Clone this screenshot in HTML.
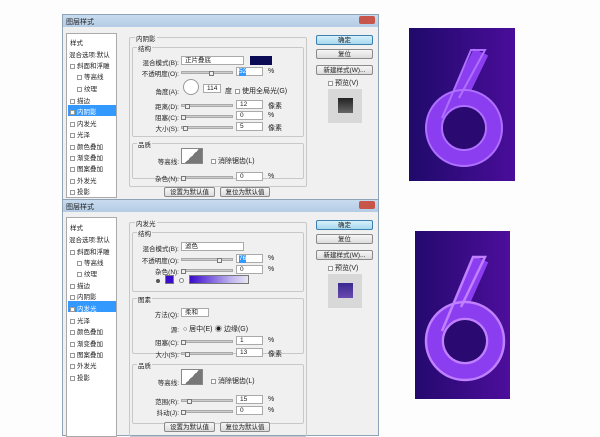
<!DOCTYPE html><html><head><meta charset="utf-8"><style>
*{margin:0;padding:0;box-sizing:border-box}
body{width:600px;height:436px;background:#fdfdfd;position:relative;overflow:hidden;font-family:"Liberation Sans","Noto Sans CJK SC",sans-serif;font-size:7px;color:#222}
div,span{position:absolute}
.dlg{background:#f0f0f0;border:1px solid #8fa3b8}
.tb{background:linear-gradient(#c9dcef,#b3cbe4);left:0;right:0;top:0;height:12px}
.tb span{left:3px;top:2px;font-size:7px}
.x{right:3px;top:1px;width:16px;height:8px;background:#c8554a;border-radius:2px}
.lp{background:#fff;border:1px solid #aaa}
.it{left:3px;white-space:nowrap;font-size:6.5px}
.cb{display:inline-block;position:static;width:5px;height:5px;border:1px solid #999;background:#fff;margin-right:2px;vertical-align:middle}
.sel{background:#3399ff;color:#fff;left:1px;width:48px;height:11px}
.gb{border:1px solid #c8c8c8;border-radius:2px}
.gl{background:#f0f0f0;padding:0 1px;font-size:6.5px}
.btn{border:1px solid #8a8a8a;border-radius:2px;background:linear-gradient(#f6f6f6,#dcdcdc);text-align:center;font-size:6.5px;line-height:9px;height:10px}
.ok{background:linear-gradient(#d6f0fb,#a8d8ee);border-color:#3c7fb1}
.sl{height:3px;background:#ccc;border:1px solid #aaa}
.in{background:#fff;border:1px solid #aaa;height:9px;font-size:6.5px;padding-left:3px;line-height:8px}
.lb{font-size:6.5px;white-space:nowrap;text-align:right;left:46px !important;width:70px}
.th{width:5px;height:5px;background:#eee;border:1px solid #777}
</style></head><body>

<!-- TOP DIALOG -->
<div class="dlg" style="left:62px;top:14px;width:317px;height:186px">
<div class="tb"><span>图层样式</span><div class="x"></div></div>
<div class="lp" style="left:3px;top:18px;width:51px;height:165px">
<span class="it" style="top:3px">样式</span>
<span class="it" style="top:15px;left:2px">混合选项:默认</span>
<span class="it" style="top:26px"><i class="cb"></i>斜面和浮雕</span>
<span class="it" style="top:37px;left:10px"><i class="cb"></i>等高线</span>
<span class="it" style="top:49px;left:10px"><i class="cb"></i>纹理</span>
<span class="it" style="top:61px"><i class="cb"></i>描边</span>
<div class="sel" style="top:71px"></div>
<span class="it" style="top:72px;color:#fff"><i class="cb"></i>内阴影</span>
<span class="it" style="top:84px"><i class="cb"></i>内发光</span>
<span class="it" style="top:95px"><i class="cb"></i>光泽</span>
<span class="it" style="top:107px"><i class="cb"></i>颜色叠加</span>
<span class="it" style="top:118px"><i class="cb"></i>渐变叠加</span>
<span class="it" style="top:129px"><i class="cb"></i>图案叠加</span>
<span class="it" style="top:141px"><i class="cb"></i>外发光</span>
<span class="it" style="top:152px"><i class="cb"></i>投影</span>
</div>
<div class="gb" style="left:66px;top:22px;width:178px;height:150px"></div>
<span class="gl" style="left:72px;top:18px">内阴影</span>
<div class="gb" style="left:69px;top:32px;width:172px;height:90px"></div>
<span class="gl" style="left:74px;top:28px">结构</span>
<span class="lb" style="top:42px">混合模式(B):</span>
<div class="in" style="left:118px;top:41px;width:63px">正片叠底</div>
<div style="left:187px;top:41px;width:22px;height:9px;background:#0a0a55"></div>
<span class="lb" style="top:53px">不透明度(O):</span>
<div class="sl" style="left:118px;top:56px;width:52px"></div><div class="th" style="left:146px;top:56px"></div>
<div class="in" style="left:173px;top:52px;width:27px"><span style="background:#3399ff;color:#fff;left:2px;top:0">52</span></div>
<span style="left:205px;top:53px">%</span>
<span class="lb" style="top:71px">角度(A):</span>
<div style="left:120px;top:64px;width:16px;height:16px;border:1px solid #999;border-radius:50%;background:#fff"></div>
<div class="in" style="left:140px;top:69px;width:18px">114</div>
<span style="left:162px;top:71px">度</span>
<span style="left:172px;top:71px"><i class="cb"></i>使用全局光(G)</span>
<span class="lb" style="top:86px">距离(D):</span>
<div class="sl" style="left:118px;top:89px;width:52px"></div><div class="th" style="left:122px;top:89px"></div>
<div class="in" style="left:173px;top:85px;width:27px">12</div><span style="left:205px;top:86px">像素</span>
<span class="lb" style="top:97px">阻塞(C):</span>
<div class="sl" style="left:118px;top:100px;width:52px"></div><div class="th" style="left:118px;top:100px"></div>
<div class="in" style="left:173px;top:96px;width:27px">0</div><span style="left:205px;top:97px">%</span>
<span class="lb" style="top:108px">大小(S):</span>
<div class="sl" style="left:118px;top:111px;width:52px"></div><div class="th" style="left:120px;top:111px"></div>
<div class="in" style="left:173px;top:107px;width:27px">5</div><span style="left:205px;top:108px">像素</span>
<div class="gb" style="left:69px;top:128px;width:172px;height:36px"></div>
<span class="gl" style="left:74px;top:124px">品质</span>
<span class="lb" style="top:141px">等高线:</span>
<div style="left:118px;top:133px;width:22px;height:16px;border:1px solid #888;background:linear-gradient(135deg,#fff 50%,#777 50%)"></div>
<span style="left:148px;top:141px"><i class="cb"></i>消除锯齿(L)</span>
<span class="lb" style="top:158px">杂色(N):</span>
<div class="sl" style="left:118px;top:161px;width:52px"></div><div class="th" style="left:118px;top:161px"></div>
<div class="in" style="left:173px;top:157px;width:27px">0</div><span style="left:205px;top:158px">%</span>
<div class="btn" style="left:101px;top:172px;width:51px">设置为默认值</div>
<div class="btn" style="left:157px;top:172px;width:50px">复位为默认值</div>
<div class="btn ok" style="left:253px;top:20px;width:57px">确定</div>
<div class="btn" style="left:253px;top:34px;width:57px">复位</div>
<div class="btn" style="left:253px;top:50px;width:57px">新建样式(W)...</div>
<span style="left:265px;top:63px"><i class="cb"></i>预览(V)</span>
<div style="left:265px;top:74px;width:34px;height:34px;background:#d8d8d8"></div>
<div style="left:275px;top:83px;width:15px;height:15px;background:linear-gradient(#222,#666)"></div>
</div>

<!-- BOTTOM DIALOG -->
<div class="dlg" style="left:62px;top:199px;width:317px;height:237px">
<div class="tb"><span>图层样式</span><div class="x"></div></div>
<div class="lp" style="left:3px;top:17px;width:51px;height:220px">
<span class="it" style="top:4px">样式</span>
<span class="it" style="top:16px;left:2px">混合选项:默认</span>
<span class="it" style="top:28px"><i class="cb"></i>斜面和浮雕</span>
<span class="it" style="top:39px;left:10px"><i class="cb"></i>等高线</span>
<span class="it" style="top:50px;left:10px"><i class="cb"></i>纹理</span>
<span class="it" style="top:62px"><i class="cb"></i>描边</span>
<span class="it" style="top:73px"><i class="cb"></i>内阴影</span>
<div class="sel" style="top:83px"></div>
<span class="it" style="top:85px;color:#fff"><i class="cb"></i>内发光</span>
<span class="it" style="top:97px"><i class="cb"></i>光泽</span>
<span class="it" style="top:108px"><i class="cb"></i>颜色叠加</span>
<span class="it" style="top:120px"><i class="cb"></i>渐变叠加</span>
<span class="it" style="top:131px"><i class="cb"></i>图案叠加</span>
<span class="it" style="top:142px"><i class="cb"></i>外发光</span>
<span class="it" style="top:154px"><i class="cb"></i>投影</span>
</div>
<div class="gb" style="left:66px;top:22px;width:178px;height:215px"></div>
<span class="gl" style="left:72px;top:18px">内发光</span>
<div class="gb" style="left:69px;top:32px;width:172px;height:60px"></div>
<span class="gl" style="left:74px;top:28px">结构</span>
<span class="lb" style="top:43px">混合模式(B):</span>
<div class="in" style="left:118px;top:42px;width:63px">滤色</div>
<span class="lb" style="top:55px">不透明度(O):</span>
<div class="sl" style="left:118px;top:58px;width:52px"></div><div class="th" style="left:154px;top:58px"></div>
<div class="in" style="left:173px;top:54px;width:27px"><span style="background:#3399ff;color:#fff;left:2px;top:0">76</span></div><span style="left:205px;top:55px">%</span>
<span class="lb" style="top:66px">杂色(N):</span>
<div class="sl" style="left:118px;top:69px;width:52px"></div><div class="th" style="left:118px;top:69px"></div>
<div class="in" style="left:173px;top:65px;width:27px">0</div><span style="left:205px;top:66px">%</span>
<div style="left:93px;top:79px;width:4px;height:4px;border-radius:50%;background:#555"></div>
<div style="left:102px;top:75px;width:9px;height:9px;background:#3b0ccc;border:1px solid #777"></div>
<div style="left:116px;top:78px;width:5px;height:5px;border-radius:50%;border:1px solid #888;background:#fff"></div>
<div style="left:126px;top:75px;width:60px;height:9px;border:1px solid #777;background:linear-gradient(90deg,#3b0ccc,#bdb2ee 70%,#e8e6f3)"></div>
<div class="gb" style="left:69px;top:98px;width:172px;height:56px"></div>
<span class="gl" style="left:74px;top:94px">图素</span>
<span class="lb" style="top:109px">方法(Q):</span>
<div class="in" style="left:118px;top:108px;width:28px">柔和</div>
<span class="lb" style="top:124px">源:</span>
<span style="left:120px;top:124px">○ 居中(E)</span>
<span style="left:152px;top:124px">◉ 边缘(G)</span>
<span class="lb" style="top:137px">阻塞(C):</span>
<div class="sl" style="left:118px;top:140px;width:52px"></div><div class="th" style="left:118px;top:140px"></div>
<div class="in" style="left:173px;top:136px;width:27px">1</div><span style="left:205px;top:137px">%</span>
<span class="lb" style="top:149px">大小(S):</span>
<div class="sl" style="left:118px;top:152px;width:52px"></div><div class="th" style="left:122px;top:152px"></div>
<div class="in" style="left:173px;top:148px;width:27px">13</div><span style="left:205px;top:149px">像素</span>
<div class="gb" style="left:69px;top:164px;width:172px;height:60px"></div>
<span class="gl" style="left:74px;top:160px">品质</span>
<span class="lb" style="top:177px">等高线:</span>
<div style="left:118px;top:169px;width:22px;height:16px;border:1px solid #888;background:linear-gradient(135deg,#fff 50%,#777 50%)"></div>
<span style="left:148px;top:176px"><i class="cb"></i>消除锯齿(L)</span>
<span class="lb" style="top:196px">范围(R):</span>
<div class="sl" style="left:118px;top:199px;width:52px"></div><div class="th" style="left:124px;top:199px"></div>
<div class="in" style="left:173px;top:195px;width:27px">15</div><span style="left:205px;top:196px">%</span>
<span class="lb" style="top:207px">抖动(J):</span>
<div class="sl" style="left:118px;top:210px;width:52px"></div><div class="th" style="left:118px;top:210px"></div>
<div class="in" style="left:173px;top:206px;width:27px">0</div><span style="left:205px;top:207px">%</span>
<div class="btn" style="left:101px;top:222px;width:51px">设置为默认值</div>
<div class="btn" style="left:157px;top:222px;width:50px">复位为默认值</div>
<div class="btn ok" style="left:253px;top:20px;width:57px">确定</div>
<div class="btn" style="left:253px;top:34px;width:57px">复位</div>
<div class="btn" style="left:253px;top:50px;width:57px">新建样式(W)...</div>
<span style="left:265px;top:63px"><i class="cb"></i>预览(V)</span>
<div style="left:265px;top:74px;width:34px;height:34px;background:#d8d8d8"></div>
<div style="left:275px;top:83px;width:15px;height:15px;background:linear-gradient(#3a2a90,#6a4ab0)"></div>
</div>

<!-- IMAGES -->
<svg style="position:absolute;left:409px;top:28px" width="106" height="153" viewBox="0 0 106 153">
<defs><linearGradient id="g1" x1="0" x2="1"><stop offset="0" stop-color="#1f0a6a"/><stop offset="1" stop-color="#4a0d9a"/></linearGradient></defs>
<rect width="106" height="153" fill="url(#g1)"/>
<g fill="none" stroke="#8a3ef0" stroke-width="16" stroke-linejoin="round">
<circle cx="55" cy="100" r="30"/><path d="M40 90 L72 24"/></g>
<g fill="none" stroke="#b070ff" stroke-width="2"><circle cx="55" cy="100" r="38"/><circle cx="55" cy="100" r="22"/><path d="M33 90 L62 22 L76 22 L50 70"/></g>
<circle cx="55" cy="100" r="21" fill="#2a0a70"/>
</svg>
<svg style="position:absolute;left:415px;top:231px" width="95" height="168" viewBox="0 0 95 168">
<defs><linearGradient id="g2" x1="0" x2="1"><stop offset="0" stop-color="#24096e"/><stop offset="1" stop-color="#4d0e9c"/></linearGradient></defs>
<rect width="95" height="168" fill="url(#g2)"/>
<g fill="none" stroke="#8a3ef0" stroke-width="16" stroke-linejoin="round">
<circle cx="50" cy="110" r="31"/><path d="M34 100 L66 28"/></g>
<g fill="none" stroke="#c080ff" stroke-width="2.5"><circle cx="50" cy="110" r="39"/><circle cx="50" cy="110" r="22"/><path d="M27 100 L58 26 L70 26 L46 76"/></g>
<circle cx="50" cy="110" r="21" fill="#2a0a70"/>
</svg>
</body></html>
